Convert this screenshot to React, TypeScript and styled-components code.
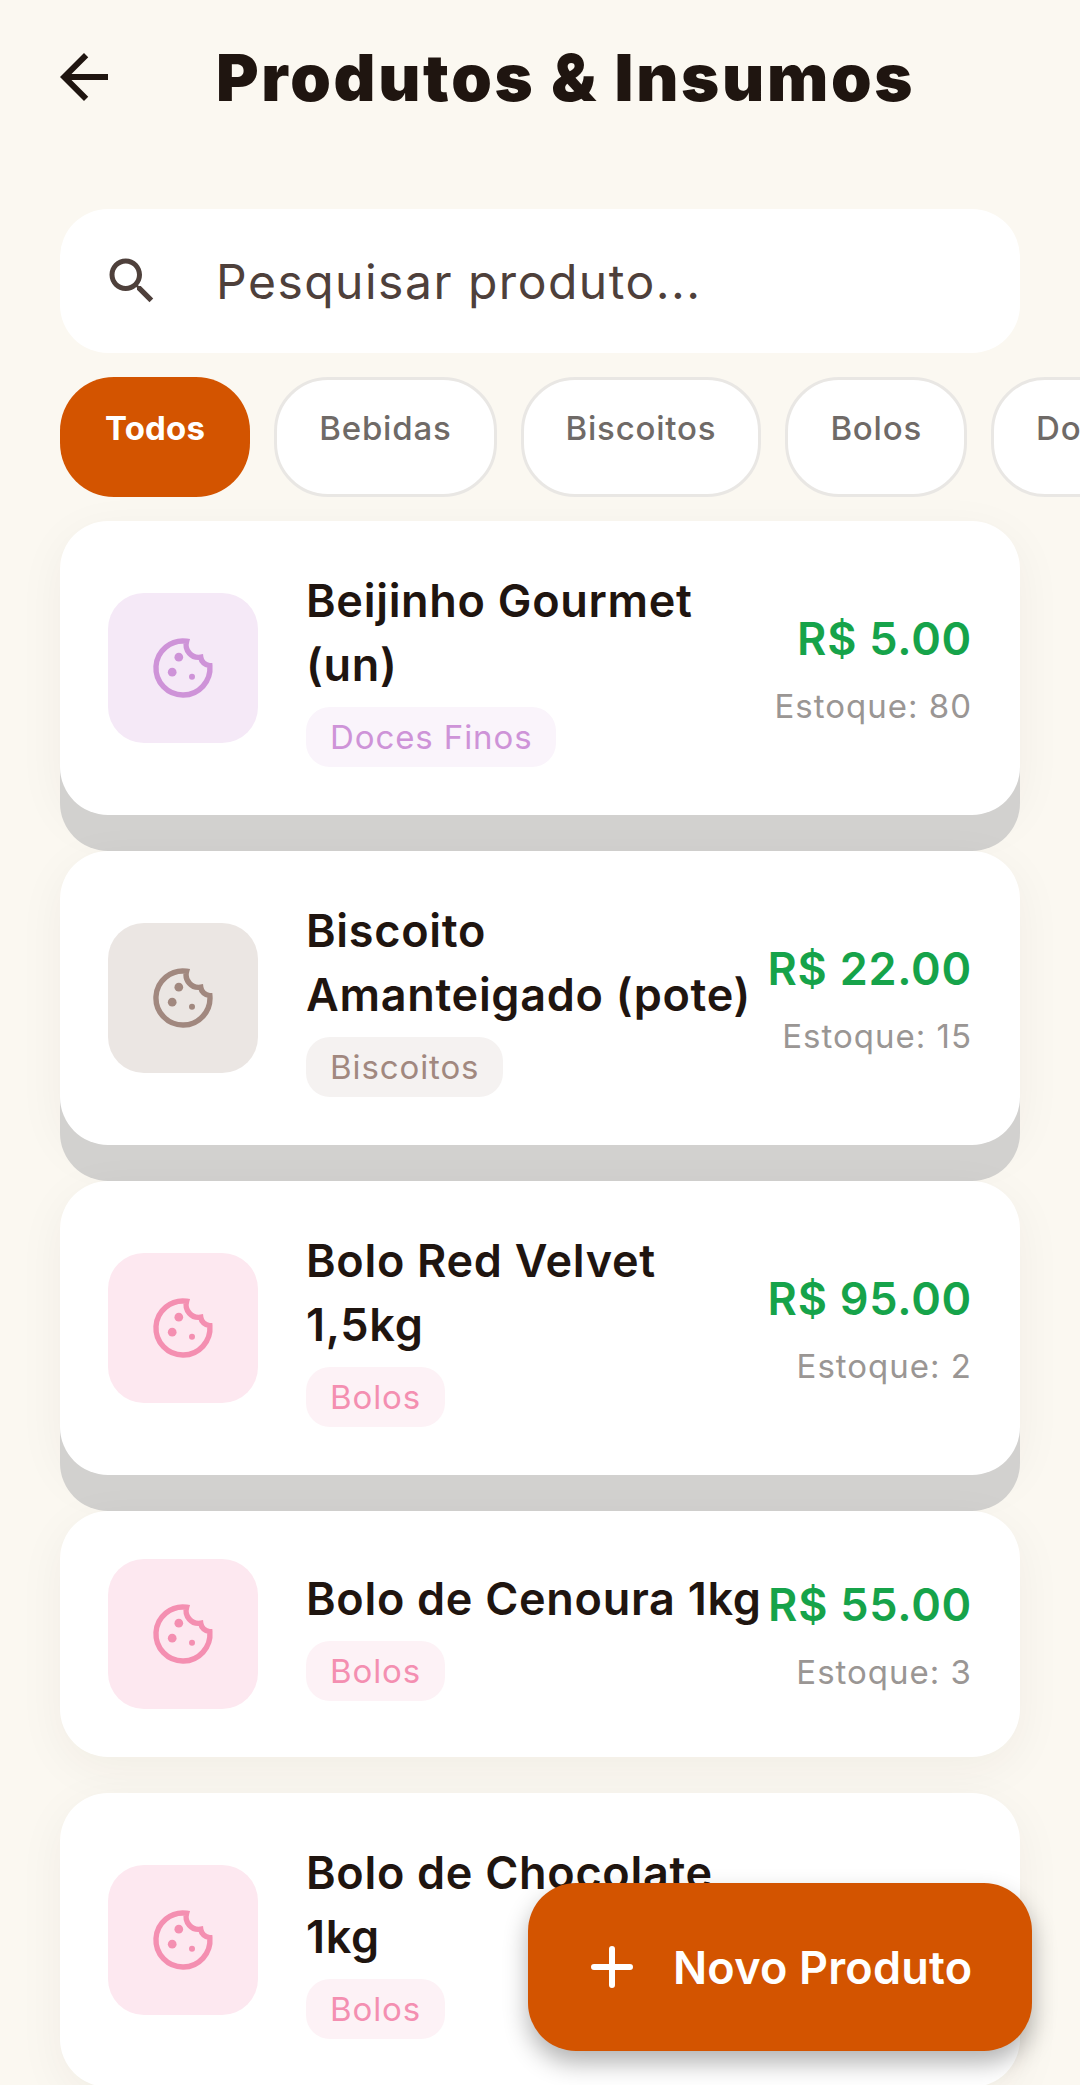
import * as React from "react";
import styled, { createGlobalStyle } from "styled-components";

const GlobalStyle = createGlobalStyle`
  html, body {
    margin: 0;
    padding: 0;
    background: #fbf8f1;
  }
  * {
    box-sizing: border-box;
  }
`;

const Screen = styled.div`
  position: relative;
  width: 1080px;
  height: 2085px;
  overflow: hidden;
  background: #fbf8f1;
  font-family: Inter, "Liberation Sans", sans-serif;
  color: #1f1510;
`;

const Header = styled.header`
  display: flex;
  align-items: center;
  height: 154px;
  padding-left: 48px;
  margin-bottom: 55px;
`;

const BackIcon = styled.svg`
  width: 72px;
  height: 72px;
  margin-right: 96px;
  flex: none;
`;

const Title = styled.h1`
  margin: 0;
  font-size: 65px;
  font-weight: 900;
  letter-spacing: 2.7px;
  white-space: nowrap;
`;

const SearchBar = styled.div`
  display: flex;
  align-items: center;
  gap: 54px;
  height: 144px;
  margin: 0 60px 24px;
  padding-left: 42px;
  border-radius: 48px;
  background: #fff;
  color: #4e403b;
`;

const SearchIcon = styled.svg`
  width: 60px;
  height: 60px;
  flex: none;
`;

const Placeholder = styled.span`
  font-size: 48px;
  letter-spacing: 1.5px;
`;

const Chips = styled.nav`
  display: flex;
  gap: 24px;
  height: 120px;
  padding-left: 60px;
  margin-bottom: 24px;
  overflow: hidden;
`;

const Chip = styled.span<{ $active?: boolean }>`
  flex: none;
  height: 120px;
  padding: ${(p) => (p.$active ? "29px 45px 0" : "26px 42px 0")};
  border-radius: 54px;
  border: ${(p) => (p.$active ? "none" : "3px solid #e9e7e4")};
  background: ${(p) => (p.$active ? "#d35400" : "#fff")};
  color: ${(p) => (p.$active ? "#fff" : "#6f6a67")};
  font-size: 33px;
  font-weight: ${(p) => (p.$active ? 700 : 500)};
  letter-spacing: ${(p) => (p.$active ? "0.2px" : "0.8px")};
  line-height: 44px;
`;

const List = styled.main`
  display: flex;
  flex-direction: column;
  gap: 36px;
  padding: 0 60px;
`;

const Card = styled.article<{ $raised?: boolean }>`
  display: flex;
  align-items: center;
  flex: none;
  padding: 48px;
  border-radius: 48px;
  background: #fff;
  box-shadow: ${(p) => (p.$raised ? "0 36px 0 #d2d1cf, " : "")}0 12px 48px rgba(60, 40, 20, 0.05);
`;

const Thumb = styled.div<{ $bg: string; $fg: string }>`
  display: flex;
  align-items: center;
  justify-content: center;
  flex: none;
  width: 150px;
  height: 150px;
  margin-right: 48px;
  border-radius: 36px;
  background: ${(p) => p.$bg};
  color: ${(p) => p.$fg};
`;

const CookieIcon = styled.svg`
  width: 72px;
  height: 72px;
`;

const Info = styled.div`
  flex: 1;
  min-width: 0;
  padding-right: 6px;
`;

const Name = styled.div`
  font-size: 45px;
  font-weight: 600;
  letter-spacing: 0.7px;
  line-height: 64px;
`;

const Tag = styled.span<{ $bg: string; $fg: string }>`
  display: inline-block;
  height: 60px;
  margin-top: 10px;
  padding: 0 24px;
  border-radius: 24px;
  background: ${(p) => p.$bg};
  color: ${(p) => p.$fg};
  font-size: 33px;
  letter-spacing: 0.9px;
  line-height: 60px;
  vertical-align: top;
`;

const PriceBox = styled.div`
  flex: none;
  text-align: right;
`;

const Price = styled.div`
  color: #16a34a;
  font-size: 45px;
  font-weight: 600;
  letter-spacing: 0.75px;
  line-height: 60px;
`;

const Stock = styled.div`
  margin-top: 15px;
  color: #9a9694;
  font-size: 33px;
  letter-spacing: 1px;
  line-height: 44px;
`;

const Fab = styled.button`
  position: absolute;
  right: 48px;
  bottom: 34px;
  display: flex;
  align-items: center;
  width: 504px;
  height: 168px;
  padding: 0 0 0 48px;
  gap: 25px;
  border: none;
  border-radius: 48px;
  background: #d35400;
  color: #fff;
  font-family: inherit;
  font-size: 45px;
  font-weight: 600;
  letter-spacing: 0.2px;
  box-shadow: 0 12px 24px rgba(0, 0, 0, 0.3);
`;

const PlusIcon = styled.svg`
  width: 72px;
  height: 72px;
  flex: none;
`;

const Cookie = () => (
  <CookieIcon viewBox="0 0 24 24" aria-hidden="true">
    <path
      d="M13.2 3.1A9 9 0 1 0 20.95 11.2 3.2 3.2 0 0 1 17.9 8.4 4.2 4.2 0 0 1 13.2 3.1Z"
      fill="none"
      stroke="currentColor"
      strokeWidth="1.8"
    />
    <circle cx="10.6" cy="8.4" r="1.45" fill="currentColor" />
    <circle cx="8.4" cy="13.4" r="1.45" fill="currentColor" />
    <circle cx="15" cy="14.9" r="1" fill="currentColor" />
  </CookieIcon>
);

const chips = ["Todos", "Bebidas", "Biscoitos", "Bolos", "Doces Finos"];

const tones = {
  doces: { box: "#f5e9f7", tag: "#faf4fb", fg: "#ce93d8" },
  biscoitos: { box: "#ebe6e3", tag: "#f5f2f1", fg: "#a1887f" },
  bolos: { box: "#fde8f0", tag: "#fdf2f6", fg: "#f48fb1" },
};

const products = [
  { name: "Beijinho Gourmet (un)", tag: "Doces Finos", tone: tones.doces, price: "5.00", stock: 80, raised: true },
  { name: "Biscoito Amanteigado (pote)", tag: "Biscoitos", tone: tones.biscoitos, price: "22.00", stock: 15, raised: true },
  { name: "Bolo Red Velvet 1,5kg", tag: "Bolos", tone: tones.bolos, price: "95.00", stock: 2, raised: true },
  { name: "Bolo de Cenoura 1kg", tag: "Bolos", tone: tones.bolos, price: "55.00", stock: 3 },
  { name: "Bolo de Chocolate 1kg", tag: "Bolos", tone: tones.bolos, price: "60.00", stock: 4 },
];

const App: React.FunctionComponent = () => (
  <Screen>
    <GlobalStyle />
    <Header>
      <BackIcon viewBox="0 0 24 24" aria-hidden="true">
        <path fill="#1f1510" d="M20 11H7.83l5.59-5.59L12 4l-8 8 8 8 1.41-1.41L7.83 13H20v-2z" />
      </BackIcon>
      <Title>Produtos &amp; Insumos</Title>
    </Header>
    <SearchBar>
      <SearchIcon viewBox="0 0 24 24" aria-hidden="true">
        <path
          fill="currentColor"
          d="M15.5 14h-.79l-.28-.27C15.41 12.59 16 11.11 16 9.5 16 5.91 13.09 3 9.5 3S3 5.91 3 9.5 5.91 16 9.5 16c1.61 0 3.09-.59 4.23-1.57l.27.28v.79l5 4.99L20.49 19l-4.99-5zm-6 0C7.01 14 5 11.99 5 9.5S7.01 5 9.5 5 14 7.01 14 9.5 11.99 14 9.5 14z"
        />
      </SearchIcon>
      <Placeholder>Pesquisar produto...</Placeholder>
    </SearchBar>
    <Chips>
      {chips.map((label, i) => (
        <Chip key={label} $active={i === 0}>{label}</Chip>
      ))}
    </Chips>
    <List>
      {products.map((item) => (
        <Card key={item.name} $raised={item.raised}>
          <Thumb $bg={item.tone.box} $fg={item.tone.fg}>
            <Cookie />
          </Thumb>
          <Info>
            <Name>{item.name}</Name>
            <Tag $bg={item.tone.tag} $fg={item.tone.fg}>{item.tag}</Tag>
          </Info>
          <PriceBox>
            <Price>R$ {item.price}</Price>
            <Stock>Estoque: {item.stock}</Stock>
          </PriceBox>
        </Card>
      ))}
    </List>
    <Fab>
      <PlusIcon viewBox="0 0 24 24" aria-hidden="true">
        <path d="M12 6v12M6 12h12" stroke="#fff" strokeWidth="2" strokeLinecap="round" />
      </PlusIcon>
      Novo Produto
    </Fab>
  </Screen>
);

export default App;
